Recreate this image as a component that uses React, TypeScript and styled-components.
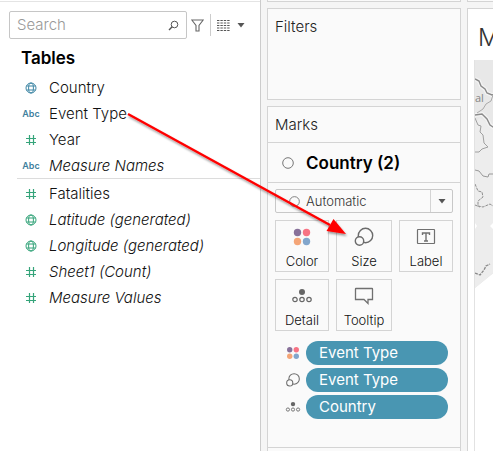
import React from "react";
import styled, { createGlobalStyle } from "styled-components";

const line = "#d4d4d4";
const blue = "#4996b2";
const green = "#35a47a";

const GlobalStyle = createGlobalStyle`
  *, *::before, *::after { box-sizing: border-box; }
  html, body, #root { height: 100%; }
  body {
    margin: 0;
    overflow: hidden;
    background: #fff;
    color: #111;
    font: 300 15px/20px Inter, "Liberation Sans", sans-serif;
  }
  button, input, select { font: inherit; color: inherit; }
  button { padding: 0; border: 0; background: none; }
  svg { display: block; flex: none; }
`;

const Page = styled.main`
  position: relative;
  display: grid;
  grid-template-columns: 260px 207px minmax(0, 1fr);
  height: 100vh;
  overflow: hidden;
`;

const DataPane = styled.aside`
  margin-top: 1px;
  border-top: 1px solid #e4e4e4;
  padding-top: 9px;
`;

const Toolbar = styled.div`
  display: flex;
  align-items: center;
  padding-left: 9px;
`;

const SearchBox = styled.label`
  display: flex;
  align-items: center;
  width: 178px;
  height: 28px;
  padding: 0 7px;
  border: 1px solid #c6c6c6;
  border-radius: 2px;
`;

const SearchInput = styled.input`
  flex: 1;
  min-width: 0;
  padding: 0;
  border: 0;
  outline: 0;
  background: none;
  font-size: 15px;
  &::placeholder { color: #999; opacity: 1; }
`;

const ToolButton = styled.button<{ $gap: number }>`
  display: flex;
  margin-left: ${(p) => p.$gap}px;
`;

const ToolDivider = styled.span`
  width: 1px;
  height: 22px;
  margin-left: 6px;
  background: #ccc;
`;

const PaneTitle = styled.h2`
  margin: 8px 0 6px 21px;
  font-size: 17px;
  font-weight: 600;
  line-height: 22px;
  color: #000;
`;

const FieldList = styled.ul<{ $split?: boolean }>`
  margin: 0 0 0 17px;
  padding: 0 0 0 4px;
  list-style: none;
  ${(p) => p.$split && `margin-top: -1px; border-top: 1px solid #dcdcdc; padding-top: 2px;`}
`;

const Field = styled.li<{ $italic?: boolean }>`
  display: grid;
  grid-template-columns: 20px 1fr;
  column-gap: 8px;
  align-items: center;
  height: 26px;
  font-style: ${(p) => (p.$italic ? "italic" : "normal")};
`;

const FieldIcon = styled.span<{ $color: string }>`
  display: flex;
  justify-content: center;
  color: ${(p) => p.$color};
  font-size: 9px;
  font-style: normal;
  font-weight: 600;
`;

const Shelves = styled.section`
  display: flex;
  flex-direction: column;
  gap: 6px;
  padding: 0 6px;
  border-left: 1px solid #ccc;
  background: #f5f5f5;
`;

const Card = styled.section<{ $grow?: boolean; $height?: number }>`
  ${(p) => (p.$grow ? "flex: 1;" : `height: ${p.$height}px; flex: none;`)}
  border: 1px solid ${line};
  background: #fafafa;
`;

const CardEdge = styled.div`
  flex: none;
  height: 2px;
  border: 1px solid ${line};
  border-top: 0;
  background: #fafafa;
`;

const CardTitle = styled.h3`
  margin: 0;
  padding: 8px 7px 7px;
  font-size: 15px;
  font-weight: 300;
  line-height: 20px;
  color: #222;
`;

const MarksTitle = styled(CardTitle)`
  border-bottom: 1px solid ${line};
`;

const LayerHeader = styled.div`
  display: flex;
  align-items: center;
  gap: 12px;
  height: 40px;
  padding-left: 14px;
  border-bottom: 1px solid ${line};
  font-size: 17px;
  font-weight: 600;
  color: #000;
`;

const MarksBody = styled.div`
  display: flex;
  flex-direction: column;
  height: 265px;
  padding: 6px 7px 0;
  border-bottom: 1px solid ${line};
`;

const TypePicker = styled.label`
  display: flex;
  align-items: center;
  height: 24px;
  padding-left: 13px;
  border: 1px solid #c8c8c8;
  border-radius: 2px;
`;

const TypeSelect = styled.select`
  appearance: none;
  flex: 1;
  height: 22px;
  margin-left: 6px;
  padding: 0;
  border: 0;
  outline: 0;
  background: none;
  font-size: 13px;
  color: #333;
`;

const PickerArrow = styled.span`
  display: flex;
  align-items: center;
  justify-content: center;
  width: 22px;
  height: 22px;
  border-left: 1px solid ${line};
`;

const MarkGrid = styled.div`
  display: grid;
  grid-template-columns: 54fr 56fr 54fr;
  gap: 7px;
  margin-top: 7px;
`;

const MarkButton = styled.button`
  display: flex;
  flex-direction: column;
  align-items: center;
  gap: 3px;
  height: 52px;
  padding-top: 5px;
  border: 1px solid ${line};
  font-size: 13px;
  line-height: 20px;
  color: #111;
`;

const Pills = styled.ul`
  display: flex;
  flex-direction: column;
  gap: 3px;
  margin: 10px 5px 0 10px;
  padding: 0;
  list-style: none;
`;

const PillRow = styled.li`
  display: flex;
  align-items: center;
  gap: 5px;
`;

const Pill = styled.button`
  flex: 1;
  height: 24px;
  padding-left: 13px;
  border-radius: 12px;
  background: ${blue};
  color: #fff;
  font-size: 15px;
  font-weight: 400;
  line-height: 24px;
  text-align: left;
`;

const ViewColumn = styled.section`
  display: flex;
  flex-direction: column;
  gap: 6px;
  background: #f5f5f5;
`;

const ViewEdge = styled(CardEdge)`
  border-right: 0;
`;

const View = styled.div`
  flex: 1;
  padding-left: 6px;
  border: 1px solid ${line};
  border-width: 1px 0 0 1px;
  background: #fff;
  overflow: hidden;
`;

const ViewTitle = styled.h1`
  margin: 15px 0 8px 4px;
  font-size: 24px;
  font-weight: 300;
  line-height: 28px;
  color: #333;
`;

const MapFrame = styled.div`
  height: 400px;
  border-left: 1px solid #e2e2e2;
`;

const Annotation = styled.svg`
  position: absolute;
  left: 0;
  top: 0;
  pointer-events: none;
`;

const Caret = () => (
  <svg width="8" height="5" viewBox="0 0 8 5"><path d="M.5 0h7L4 4.5z" fill="#555" /></svg>
);

const Globe = () => (
  <svg width="12" height="12" viewBox="0 0 12 12" fill="none" stroke="currentColor">
    <circle cx="6" cy="6" r="5" />
    <ellipse cx="6" cy="6" rx="2.4" ry="5" />
    <path d="M1.6 4h8.8M1.6 8h8.8" />
  </svg>
);

const Hash = () => (
  <svg width="12" height="12" viewBox="0 0 12 12" fill="none" stroke="currentColor" strokeWidth="1.2">
    <path d="M4.5 1v10M8.5 1v10M1 4.5h10M1 8.5h10" />
  </svg>
);

const Ring = ({ size }: { size: number }) => (
  <svg width={size} height={size} viewBox="0 0 12 12" fill="none" stroke="#777">
    <circle cx="6" cy="6" r="5.3" />
  </svg>
);

const ColorIcon = ({ size }: { size: number }) => (
  <svg width={size} height={size} viewBox="0 0 22 22">
    <circle cx="6.5" cy="6.5" r="3.7" fill="#88719a" />
    <circle cx="15.5" cy="6.5" r="3.7" fill="#f77384" />
    <circle cx="6.5" cy="15.5" r="3.7" fill="#f4a577" />
    <circle cx="15.5" cy="15.5" r="3.7" fill="#82a6cc" />
  </svg>
);

const SizeIcon = ({ size }: { size: number }) => (
  <svg width={size} height={size} viewBox="0 0 22 22" fill="none" stroke="#6b6b6b" strokeWidth="1.4">
    <circle cx="12.5" cy="9.5" r="7.2" />
    <circle cx="6.5" cy="15" r="4.2" fill="#fafafa" />
  </svg>
);

const LabelIcon = () => (
  <svg width="22" height="22" viewBox="0 0 22 22" fill="none" stroke="#707070">
    <rect x="2.5" y="3.5" width="17" height="14" rx=".5" strokeWidth="1.2" />
    <path d="M7.5 9V7h7v2M11 7v8M9 15h4" strokeWidth="1.4" />
  </svg>
);

const DetailIcon = ({ size }: { size: number }) => (
  <svg width={size} height={size} viewBox="0 0 22 22" fill="none" stroke="#666" strokeWidth="1.2">
    <circle cx="11" cy="7" r="3" fill="#666" stroke="none" />
    <circle cx="4" cy="14.5" r="2.2" />
    <circle cx="11" cy="14.5" r="2.2" />
    <circle cx="18" cy="14.5" r="2.2" />
  </svg>
);

const TooltipIcon = () => (
  <svg width="22" height="22" viewBox="0 0 22 22" fill="none" stroke="#707070" strokeWidth="1.3">
    <path d="M3 3.5h16a.5.5 0 0 1 .5.5v10.500h-4.500v4l-4-4H2.500V4a.5.5 0 0 1 .5-.5z" />
  </svg>
);

const MapDrawing = () => (
  <svg width="60" height="230" viewBox="0 0 60 230" fill="none">
    <path d="M0 0h60v180L0 228z" fill="#e8e8e8" />
    <path d="M0 62l5-4 13 8 42-9v120L0 228z" fill="#ededed" />
    <path d="M0 19l4 2 2 5 4 3 2 4 5 2 4-1 12 4M0 55l7-1 5 5 3 6 6 4 12 2" stroke="#f4f4f4" strokeWidth="4" />
    <path d="M0 19l4 2 2 5 4 3 2 4 5 2 4-1 12 4" stroke="#8b8b8b" strokeWidth="1.4" />
    <path d="M0 55l7-1 5 5 3 6 6 4 12 2" stroke="#8b8b8b" strokeWidth="1.4" />
    <path d="M2 53l6-4 3-5 5-3 2-6 10-7" stroke="#aaa" />
    <path d="M0 58l3 7 3 1-1 6 3 3 1 8 4 4-6 2-3 3-4 0" stroke="#a0a0a0" />
    <path d="M0 110l4 1 4 5 5 1 1-3 5 0 14-5" stroke="#999" />
    <path d="M0 124l3 7 4 1 1 5-5 4 0 5 5 1 7-3 3 2 15-2M0 145l5 2" stroke="#8f8f8f" strokeDasharray="3 1" />
    <path d="M0 163l2 3-2 3zM15 166l4-4v8z" fill="#fff" />
    <path d="M0 213l5 2 4-5 2-4 4-2" stroke="#888" strokeWidth="1.3" strokeDasharray="3 1" />
    <text x="0" y="42" fill="#858585" fontSize="11" fontWeight="400" fontFamily="Open Sans">al</text>
  </svg>
);

const dimensions = [
  { name: "Country", icon: <Globe />, italic: false, color: "#3f87a5" },
  { name: "Event Type", icon: "Abc", italic: false, color: "#3f7f9e" },
  { name: "Year", icon: <Hash />, italic: false, color: green },
  { name: "Measure Names", icon: "Abc", italic: true, color: "#3f7f9e" },
];

const measures = [
  { name: "Fatalities", icon: <Hash />, italic: false, color: green },
  { name: "Latitude (generated)", icon: <Globe />, italic: true, color: green },
  { name: "Longitude (generated)", icon: <Globe />, italic: true, color: green },
  { name: "Sheet1 (Count)", icon: <Hash />, italic: true, color: green },
  { name: "Measure Values", icon: <Hash />, italic: true, color: green },
];

const marks = [
  { name: "Color", icon: <ColorIcon size={22} /> },
  { name: "Size", icon: <SizeIcon size={22} /> },
  { name: "Label", icon: <LabelIcon /> },
  { name: "Detail", icon: <DetailIcon size={22} /> },
  { name: "Tooltip", icon: <TooltipIcon /> },
];

const pills = [
  { name: "Event Type", icon: <ColorIcon size={16} /> },
  { name: "Event Type", icon: <SizeIcon size={16} /> },
  { name: "Country", icon: <DetailIcon size={16} /> },
];

const Fields = ({ items, split }: { items: typeof dimensions | typeof measures; split?: boolean }) => (
  <FieldList $split={split}>
    {items.map((f) => (
      <Field key={f.name} $italic={f.italic}>
        <FieldIcon $color={f.color}>{f.icon}</FieldIcon>
        {f.name}
      </Field>
    ))}
  </FieldList>
);

export default function App() {
  return (
    <>
      <GlobalStyle />
      <Page>
        <DataPane>
          <Toolbar>
            <SearchBox>
              <SearchInput type="text" placeholder="Search" aria-label="Search" />
              <svg width="11" height="11" viewBox="0 0 11 11" fill="none" stroke="#555">
                <circle cx="6.500" cy="4.500" r="3.300" />
                <path d="M4.200 6.800L1 10" strokeWidth="1.400" />
              </svg>
            </SearchBox>
            <ToolButton $gap={4} aria-label="Filter">
              <svg width="13" height="13" viewBox="0 0 13 13" fill="none" stroke="#666" strokeWidth="1.1">
                <path d="M.8 1h11.400L8 6.500v5.500H5V6.500z" />
              </svg>
            </ToolButton>
            <ToolDivider />
            <ToolButton $gap={6} aria-label="View as list">
              <svg width="13" height="11" viewBox="0 0 13 11" stroke="#555" strokeDasharray="2.400 1">
                <path d="M0 .5h13M0 3h13M0 5.500h13M0 8h13M0 10.500h13" />
              </svg>
            </ToolButton>
            <ToolButton $gap={7} aria-label="View options"><Caret /></ToolButton>
          </Toolbar>
          <PaneTitle>Tables</PaneTitle>
          <Fields items={dimensions} />
          <Fields items={measures} split />
        </DataPane>

        <Shelves>
          <CardEdge />
          <Card $height={92}>
            <CardTitle>Filters</CardTitle>
          </Card>
          <Card $grow>
            <MarksTitle>Marks</MarksTitle>
            <LayerHeader>
              <Ring size={12} />
              Country (2)
            </LayerHeader>
            <MarksBody>
              <TypePicker>
                <Ring size={11} />
                <TypeSelect aria-label="Mark type"><option>Automatic</option></TypeSelect>
                <PickerArrow><Caret /></PickerArrow>
              </TypePicker>
              <MarkGrid>
                {marks.map((m) => (
                  <MarkButton key={m.name}>{m.icon}{m.name}</MarkButton>
                ))}
              </MarkGrid>
              <Pills>
                {pills.map((p, i) => (
                  <PillRow key={i}>{p.icon}<Pill>{p.name}</Pill></PillRow>
                ))}
              </Pills>
            </MarksBody>
          </Card>
        </Shelves>

        <ViewColumn>
          <ViewEdge />
          <View>
            <ViewTitle>M</ViewTitle>
            <MapFrame><MapDrawing /></MapFrame>
          </View>
        </ViewColumn>

        <Annotation width="493" height="451" viewBox="0 0 493 451">
          <defs>
            <filter id="shadow" x="-10%" y="-10%" width="120%" height="130%">
              <feDropShadow dx="1" dy="2" stdDeviation="1" floodColor="#000" floodOpacity=".4" />
            </filter>
          </defs>
          <g filter="url(#shadow)">
            <path d="M128 114L330 225" stroke="#f00" strokeWidth="2.4" />
            <path d="M346 234L326.500 231L333.500 219z" fill="#f00" />
          </g>
        </Annotation>
      </Page>
    </>
  );
}
